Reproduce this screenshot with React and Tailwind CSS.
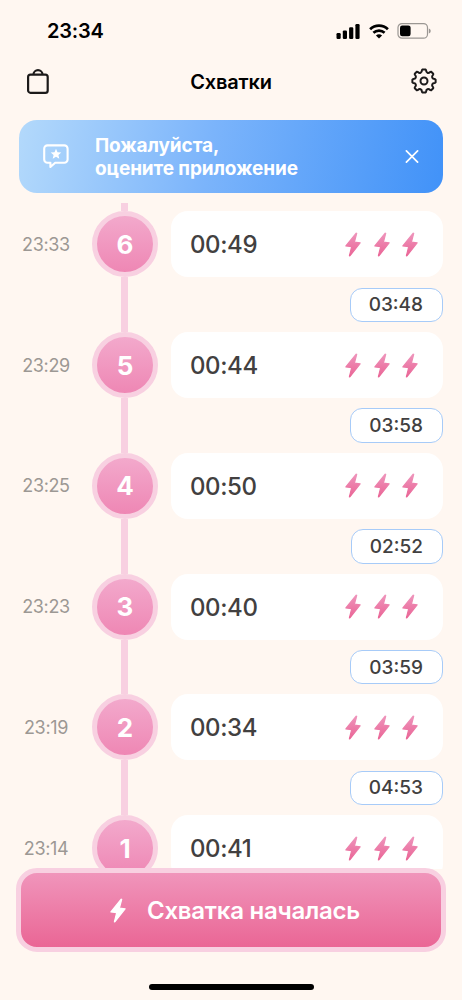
import React from "react";

const contractions = [
  { id: 6, time: "23:33", duration: "00:49", interval: "03:48" },
  { id: 5, time: "23:29", duration: "00:44", interval: "03:58" },
  { id: 4, time: "23:25", duration: "00:50", interval: "02:52" },
  { id: 3, time: "23:23", duration: "00:40", interval: "03:59" },
  { id: 2, time: "23:19", duration: "00:34", interval: "04:53" },
  { id: 1, time: "23:14", duration: "00:41", interval: null },
];

// outline of a gear with eight rounded teeth
const gearPath = () => {
  const point = (deg, r) => {
    const a = (deg * Math.PI) / 180;
    return `${(14 + r * Math.sin(a)).toFixed(2)} ${(14 - r * Math.cos(a)).toFixed(2)}`;
  };
  let d = "";
  for (let i = 0; i < 8; i++) {
    const c = i * 45;
    d += `${i === 0 ? "M" : "L"}${point(c - 7, 11.7)} L${point(c + 7, 11.7)} Q${point(c + 10, 11.5)} ${point(c + 11, 10.9)} `;
    d += `C${point(c + 14, 8.4)} ${point(c + 31, 8.4)} ${point(c + 34, 10.9)} Q${point(c + 35, 11.5)} ${point(c + 38, 11.7)} `;
  }
  return d + "Z";
};

function Bolt({ className, fill }) {
  return (
    <svg viewBox="0 0 16 25" className={className} fill={fill} stroke={fill} strokeWidth="1.2" strokeLinejoin="round">
      <path d="M11.2 1.2 .9 14 6.7 14.6 4.4 23.8 5 23.7 15.1 10.8 9.4 10.2 11.7 1.4Z" />
    </svg>
  );
}

function StatusBar() {
  return (
    <div className="flex h-[60px] items-center justify-between pl-[47px] pr-[31px] pt-[2px]">
      <span className="text-[20px] font-semibold leading-none tracking-[-0.2px] text-black">23:34</span>
      <div className="flex items-center">
        <svg width="24" height="15" viewBox="0 0 24 15" fill="#000">
          <rect x="0.5" y="9" width="4.2" height="6" rx="1.2" />
          <rect x="6.8" y="6.4" width="4.2" height="8.6" rx="1.2" />
          <rect x="13.1" y="3.3" width="4.2" height="11.7" rx="1.2" />
          <rect x="19.4" y="0" width="4.2" height="15" rx="1.2" />
        </svg>
        <svg width="20" height="15" viewBox="0 0 20 15" className="ml-[9px]" fill="none" stroke="#000">
          <path d="M1.1 5.2a12.8 12.8 0 0 1 17.8 0" strokeWidth="2.7" />
          <path d="M4.4 8.8a8.2 8.2 0 0 1 11.2 0" strokeWidth="2.6" />
          <path d="M10 14.6 6.9 11.6a4.7 4.7 0 0 1 6.2 0Z" fill="#000" stroke="none" />
        </svg>
        <svg width="34" height="16" viewBox="0 0 34 16" className="ml-[8px]">
          <rect x="1" y="0.6" width="29.5" height="14.6" rx="4" fill="none" stroke="#9b9793" strokeWidth="1.2" />
          <rect x="3" y="2.5" width="10.6" height="10.8" rx="2.2" fill="#000" />
          <path d="M31.8 5.4v5c1.4-.6 1.9-1.5 1.9-2.5s-.5-1.9-1.9-2.5Z" fill="#9b9793" />
        </svg>
      </div>
    </div>
  );
}

function Header() {
  return (
    <header className="flex h-[60px] items-start justify-between pl-[26px] pr-[24px] pt-[7px]">
      <svg width="24" height="28" viewBox="0 0 24 28" fill="none" stroke="#1c1a1a" strokeWidth="2.2">
        <rect x="2.1" y="7.7" width="19.6" height="18.1" rx="2.4" />
        <path d="M7.5 7.4a4.5 4.2 0 0 1 9 0" />
      </svg>
      <h1 className="pl-[2px] pt-[2px] text-[20px] font-semibold leading-[26px] tracking-[-0.2px] text-black">Схватки</h1>
      <svg width="28" height="28" viewBox="0 0 28 28" fill="none" stroke="#1c1a1a" strokeWidth="2" strokeLinejoin="round">
        <path d={gearPath()} />
        <circle cx="14" cy="14" r="3.5" />
      </svg>
    </header>
  );
}

function RateBanner() {
  return (
    <div className="mx-[19px] flex h-[73px] shrink-0 items-center rounded-[18px] bg-[linear-gradient(100deg,#b3d9fb_0%,#7bb4fb_45%,#4192f8_100%)] pl-[24px] pr-[24px] text-white">
      <svg width="26" height="25" viewBox="0 0 26 25" fill="none" stroke="#fff" strokeWidth="2.1" strokeLinejoin="round">
        <path d="M4.5 1.4h16.8a3.3 3.3 0 0 1 3.3 3.3v10.8a3.3 3.3 0 0 1-3.3 3.3H12.2L7.4 23V18.8H4.5a3.3 3.3 0 0 1-3.3-3.3V4.7a3.3 3.3 0 0 1 3.3-3.3Z" />
        <path
          d="m13 4.8 1.5 3.5 3.8.3-2.9 2.5.9 3.7-3.3-2-3.3 2 .9-3.7-2.9-2.5 3.8-.3Z"
          fill="#fff"
          stroke="none"
        />
      </svg>
      <p className="ml-[26px] flex-1 pt-px text-[19px] font-bold leading-[23px] tracking-[-0.1px]">
        Пожалуйста,
        <br />
        оцените приложение
      </p>
      <svg width="14" height="14" viewBox="0 0 14 14" stroke="#fff" strokeWidth="1.7" strokeLinecap="round">
        <path d="M1.4 .9l11.2 11.2M12.6 .9 1.4 12.1" />
      </svg>
    </div>
  );
}

function ContractionRow({ item }) {
  return (
    <div className="flex h-[120.8px] shrink-0 pr-[19px]">
      <div className="flex h-[66px] w-[92px] items-center justify-center text-[18px] tracking-[-0.35px] text-[#9c9894]">
        {item.time}
      </div>
      <div className="flex w-[66px] flex-col items-center">
        <div className="flex h-[66px] w-[66px] shrink-0 items-center justify-center rounded-full border-[5px] border-[#f8d0e1] bg-[linear-gradient(#f3acce,#ee84b2)] bg-origin-border text-[26px] font-bold text-white">
          {item.id}
        </div>
        <div className="mr-px w-[7px] flex-1 bg-[#f8d0e1]" />
      </div>
      <div className="ml-[13px] flex flex-1 flex-col items-end">
        <div className="flex h-[66px] w-full items-center justify-between rounded-[17px] bg-white pl-[19px] pr-[25px]">
          <span className="pt-[2px] text-[24px] font-medium tracking-[-0.4px] text-[#424040]">{item.duration}</span>
          <div className="flex gap-[12.5px]">
            <Bolt className="h-[25px] w-[16px]" fill="url(#boltPink)" />
            <Bolt className="h-[25px] w-[16px]" fill="url(#boltPink)" />
            <Bolt className="h-[25px] w-[16px]" fill="url(#boltPink)" />
          </div>
        </div>
        {item.interval && (
          <div className="mt-[10.4px] flex h-[34.4px] items-center rounded-[12px] border-[1.5px] border-[#a7cbf8] bg-white pl-[18px] pr-[19px] pt-px text-[19px] font-medium text-[#424040]">
            {item.interval}
          </div>
        )}
      </div>
    </div>
  );
}

export default function App() {
  return (
    <div className="flex h-[1000px] w-[462px] flex-col overflow-hidden bg-[#fff7f1] font-['Inter','Liberation_Sans',sans-serif]">
      <svg width="0" height="0" className="absolute">
        <defs>
          <linearGradient id="boltPink" x1="0" y1="0" x2="0" y2="1">
            <stop offset="0" stopColor="#ee94bb" />
            <stop offset="1" stopColor="#ea6596" />
          </linearGradient>
        </defs>
      </svg>
      <StatusBar />
      <Header />
      <RateBanner />
      <main className="mt-[10px] flex h-[666px] shrink-0 flex-col overflow-hidden">
        <div className="ml-[121px] h-[8.3px] w-[7px] shrink-0 bg-[#f8d0e1]" />
        {contractions.map((item) => (
          <ContractionRow key={item.id} item={item} />
        ))}
      </main>
      <div className="relative -mt-px flex h-[84px] shrink-0 px-[16px]">
        <button className="flex flex-1 items-center justify-center rounded-[21px] border-[5px] border-[#f8d0e1] bg-[linear-gradient(#f095bb,#ea6695)] pl-[8px] text-white">
          <Bolt className="h-[25px] w-[16px]" fill="#fff" />
          <span className="ml-[21px] pt-px text-[24px] font-semibold tracking-[-0.24px]">Схватка началась</span>
        </button>
      </div>
      <div className="mx-auto mt-[32px] h-[6px] w-[165px] rounded-full bg-black" />
    </div>
  );
}
